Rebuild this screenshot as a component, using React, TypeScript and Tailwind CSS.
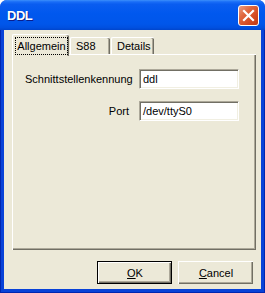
import React from "react";

const font = { fontFamily: '"Liberation Sans", Arial, sans-serif' };

function Tab({ label, selected, w }: { label: string; selected?: boolean; w: string }) {
  if (selected) {
    return (
      <div className="relative z-10 -mb-[2px] h-[22px] w-[57px] bg-[#ece9d8] border-t border-l border-white rounded-tl-[2px] rounded-tr-[2px] shadow-[inset_-1px_0_#716f64,inset_-2px_0_#aca899] flex items-start pl-[2px] pt-[2px]">
        <div className="h-[18px] w-[53px] border border-dotted border-black flex items-center justify-center text-[11px] leading-none text-black">
          {label}
        </div>
      </div>
    );
  }
  return (
    <div className={`${w} h-[17px] bg-[#ece9d8] border-t border-l border-white rounded-tl-[2px] rounded-tr-[2px] shadow-[inset_-1px_0_#716f64,inset_-2px_0_#aca899] flex items-center pl-[5px] text-[11px] leading-none text-black`}>
      {label}
    </div>
  );
}

function Field({ value }: { value: string }) {
  return (
    <div className="h-[20px] w-[100px] bg-white border border-t-[#aca899] border-l-[#aca899] border-b-white border-r-white shadow-[inset_1px_1px_#716f64,inset_-1px_-1px_#f1efe2] flex items-center pl-[3px] text-[11px] leading-none text-black">
      {value}
    </div>
  );
}

export default function App() {
  return (
    <div className="w-[265px] h-[293px] bg-white" style={font}>
      <div className="w-[265px] h-[293px] flex flex-col rounded-t-[7px] overflow-hidden bg-[#0842d8]">
        {/* Title bar */}
        <div className="h-[30px] shrink-0 flex items-center justify-between pl-[7px] pr-[6px] bg-[linear-gradient(to_bottom,#3c8ffb_0%,#1a6ef7_6%,#0a5df0_14%,#0058ee_45%,#0056ea_80%,#0050e0_92%,#0045cc_100%)]">
          <span className="text-white font-bold text-[13px] tracking-[-0.5px] [text-shadow:1px_1px_#0a1e8c] mt-[1px]">
            DDL
          </span>
          <div className="w-[21px] h-[21px] rounded-[3px] border border-white bg-[linear-gradient(135deg,#ea9d82_0%,#e0683f_35%,#d34a22_70%,#c03a14_100%)] flex items-center justify-center mt-[1px]">
            <svg width="13" height="13" viewBox="0 0 13 13">
              <path d="M2 2 L11 11 M11 2 L2 11" stroke="white" strokeWidth="2.2" strokeLinecap="square" />
            </svg>
          </div>
        </div>
        {/* Client area with frame */}
        <div className="flex-1 px-[4px] pb-[4px] shadow-[inset_1px_0_#0026b0,inset_-1px_0_#0026b0,inset_0_-1px_#0026b0]">
          <div className="h-full bg-[#ece9d8] flex flex-col pl-[8px] pr-[5px] pt-[4px]">
            <div className="flex items-end h-[20px] gap-[1px]">
              <Tab label="Allgemein" selected w="w-[57px]" />
              <Tab label="S88" w="w-[40px]" />
              <Tab label="Details" w="w-[43px]" />
            </div>
            <div className="h-[196px] w-[244px] border-t border-l border-white shadow-[inset_-1px_-1px_#716f64,inset_-2px_-2px_#aca899] pt-[14px] pl-[12px]">
              <div className="grid grid-cols-[104px_100px] gap-x-[10px] gap-y-[12px] items-center text-[11px] text-black">
                <div className="text-right leading-none">Schnittstellenkennung</div>
                <Field value="ddl" />
                <div className="text-right leading-none">Port</div>
                <Field value="/dev/ttyS0" />
              </div>
            </div>
            <div className="flex justify-end gap-[6px] mt-[11px] pr-[3px]">
              <div className="w-[75px] h-[23px] border border-black bg-[#ece9d8] flex">
                <div className="flex-1 border-t border-l border-white shadow-[inset_-1px_-1px_#716f64,inset_-2px_-2px_#aca899] flex items-center justify-center text-[11px] leading-none text-black">
                  <span><span className="underline">O</span>K</span>
                </div>
              </div>
              <div className="w-[75px] h-[23px] bg-[#ece9d8] border-t border-l border-white shadow-[inset_-1px_-1px_#716f64,inset_-2px_-2px_#aca899] flex items-center justify-center text-[11px] leading-none text-black">
                <span><span className="underline">C</span>ancel</span>
              </div>
            </div>
          </div>
        </div>
      </div>
    </div>
  );
}
